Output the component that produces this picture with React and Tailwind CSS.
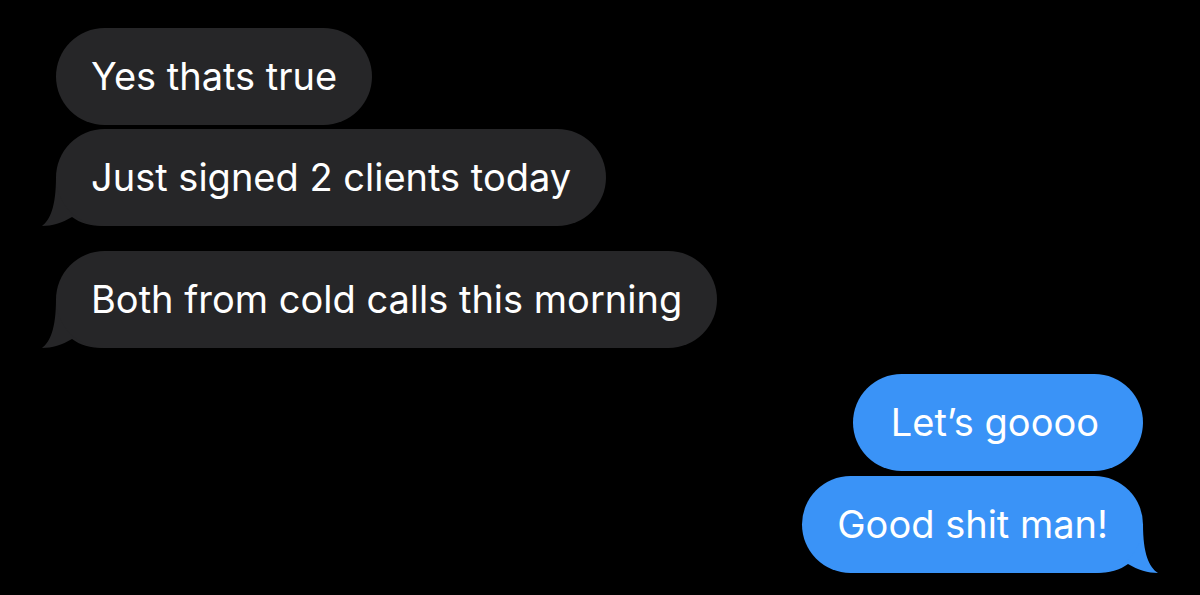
import React from "react";

function LeftTail({ color }) {
  return (
    <svg
      className="absolute left-[-14px] bottom-0"
      width="62"
      height="50"
      viewBox="0 0 62 50"
    >
      <path
        d="M 14 1 C 14 31, 8 44, 0 50 C 10 50, 20 47, 30 41 C 38 47, 48 50, 62 50 L 62 1 Z"
        fill={color}
      />
    </svg>
  );
}

function RightTail({ color }) {
  return (
    <svg
      className="absolute right-[-15px] bottom-0"
      width="63"
      height="50"
      viewBox="0 0 63 50"
    >
      <path
        d="M 48 1 C 48 31, 54 44, 63 50 C 53 50, 43 47, 33 41 C 25 47, 15 50, 0 50 L 0 1 Z"
        fill={color}
      />
    </svg>
  );
}

function Gray({ children, tail, className = "" }) {
  return (
    <div className={"relative self-start " + className}>
      {tail && <LeftTail color="#262628" />}
      <div className="relative h-[97px] px-[35px] rounded-full bg-[#262628] flex items-center text-white text-[38px] whitespace-nowrap">
        {children}
      </div>
    </div>
  );
}

function Blue({ children, tail, className = "", inner = "px-[35px]" }) {
  return (
    <div className={"relative self-end " + className}>
      {tail && <RightTail color="#3a93f7" />}
      <div className={"relative h-[97px] rounded-full bg-[#3a93f7] flex items-center text-white text-[38px] whitespace-nowrap " + inner}>
        {children}
      </div>
    </div>
  );
}

export default function App() {
  return (
    <div
      className="w-[1200px] h-[595px] bg-black flex flex-col pt-[28px] pl-[56px] pr-[57px] overflow-hidden"
      style={{ fontFamily: "Inter, 'Noto Sans', sans-serif" }}
    >
      <Gray>Yes thats true</Gray>
      <Gray tail className="mt-[4px]">Just signed 2 clients today</Gray>
      <Gray tail className="mt-[25px]">Both from cold calls this morning</Gray>
      <Blue className="mt-[26px]" inner="pl-[38px] pr-[44px]">Let’s goooo</Blue>
      <Blue tail className="mt-[5px]">Good shit man!</Blue>
    </div>
  );
}
